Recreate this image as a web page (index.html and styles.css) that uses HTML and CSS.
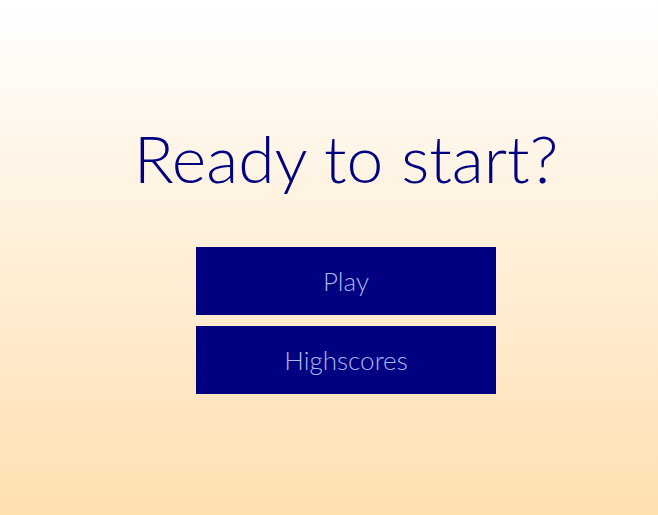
FILE: index.html
```html
<!DOCTYPE html>
<html>
<head>
<meta charset="utf-8">
<link rel="stylesheet" href="styles.css">
</head>
<body>
<main class="start">
  <h1 class="title">Ready to start?</h1>
  <div class="menu">
    <button class="btn">Play</button>
    <button class="btn">Highscores</button>
  </div>
</main>
</body>
</html>
```
FILE: styles.css
```css
html, body {
  margin: 0;
  height: 100%;
}
body {
  background: linear-gradient(to bottom, #ffffff 0%, #ffdfb0 100%);
  font-family: Lato, "Open Sans", sans-serif;
  font-weight: 300;
}
.start {
  display: flex;
  flex-direction: column;
  align-items: center;
  padding-left: 34px;
  padding-top: 118px;
}
.title {
  margin: 0;
  font-size: 66px;
  font-weight: 300;
  color: #000080;
  line-height: 80px;
  letter-spacing: 0;
}
.menu {
  display: flex;
  flex-direction: column;
  gap: 11px;
  margin-top: 49px;
}
.btn {
  width: 300px;
  height: 68px;
  border: none;
  background: #000080;
  color: #a9b6f0;
  font-family: Lato, "Open Sans", sans-serif;
  font-weight: 300;
  font-size: 26px;
  padding: 0;
}
```
